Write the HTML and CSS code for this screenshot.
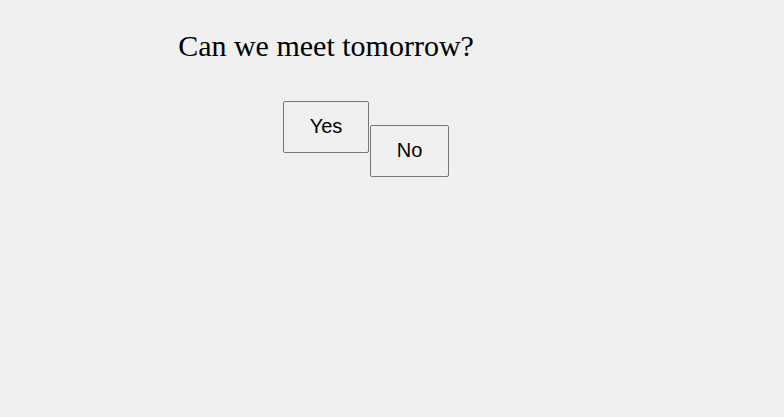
FILE: index.html
```html
<!DOCTYPE html>
<html>
<head>
<meta charset="utf-8">
<link rel="stylesheet" href="styles.css">
</head>
<body>
<main class="stage">
  <h1 class="question">Can we meet tomorrow?</h1>
  <div class="choices">
    <span></span>
    <button class="btn yes">Yes</button>
    <button class="btn no">No</button>
  </div>
</main>
</body>
</html>
```
FILE: styles.css
```css
html, body {
  margin: 0;
  background: #f0f0f0;
}
.stage {
  width: 652px;
  display: flex;
  flex-direction: column;
  align-items: center;
}
.question {
  font-family: "Liberation Serif", "Times New Roman", serif;
  font-weight: normal;
  font-size: 30px;
  line-height: 34px;
  margin: 29px 0 0 0;
  color: #000;
}
.choices {
  width: 100%;
  margin-top: 38px;
  display: grid;
  grid-template-columns: 1fr auto 1fr;
  column-gap: 1px;
  align-items: start;
}
.btn {
  font-family: "Liberation Sans", Arial, sans-serif;
  font-size: 20px;
  line-height: 22px;
  color: #000;
  background: #f0f0f0;
  border: 1px solid #767676;
  border-radius: 2px;
  height: 52px;
  padding: 0 26px 2px;
  margin: 0;
}
.no {
  justify-self: start;
  padding: 0 25.5px 2px;
  margin-top: 24px;
}
```
